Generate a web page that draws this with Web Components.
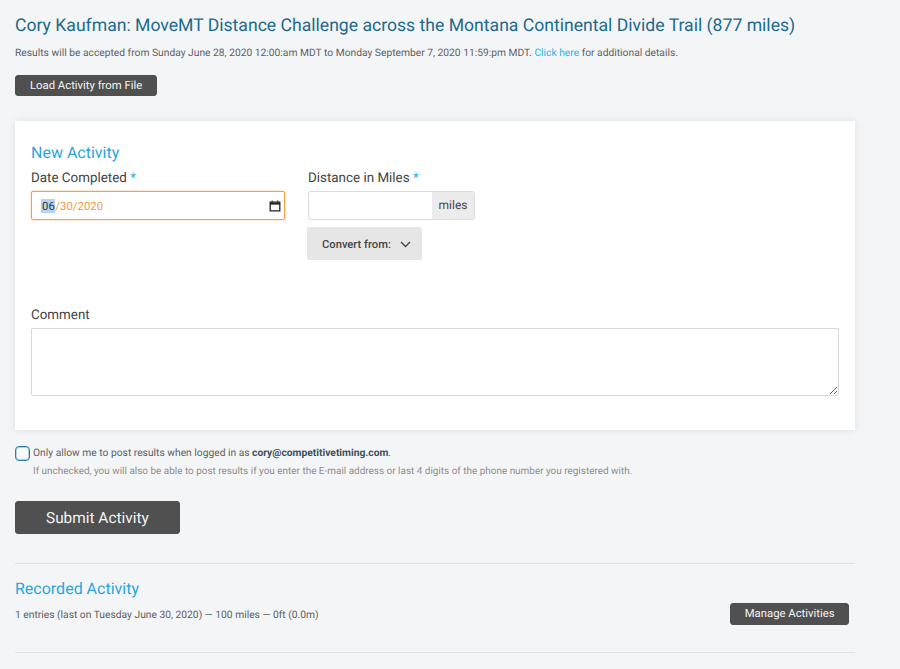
<!DOCTYPE html>
<html lang="en">
<head>
<meta charset="utf-8">
<title>MoveMT Distance Challenge</title>
<style>
html, body { margin: 0; padding: 0; }
body { background: #f4f5f7; font-family: Roboto, "Liberation Sans", sans-serif; color: #4a4a4a; text-rendering: geometricPrecision; }
</style>
</head>
<body>

<activity-page>
  <span slot="title">Cory Kaufman: MoveMT Distance Challenge across the Montana Continental Divide Trail (877 miles)</span>
  <activity-form slot="form"></activity-form>
  <recorded-activity slot="recorded"></recorded-activity>
</activity-page>

<script>
const pageTemplate = document.createElement('template')
pageTemplate.innerHTML = `
<style>
:host { display: block; height: 669px; overflow: hidden; box-sizing: border-box; padding: 16px 45px 0 15px; }
h1 { margin: 0; font-size: 17.6px; line-height: 21px; font-weight: 400; color: #1c6a8c; white-space: nowrap; }
p { margin: 9px 0 0; font-size: 10.27px; line-height: 14px; color: #5f5f5f; white-space: nowrap; }
a { color: #29b6ee; text-decoration: none; }
.load { display: block; margin-top: 15px; }
</style>
<h1><slot name="title"></slot></h1>
<p>Results will be accepted from Sunday June 28, 2020 12:00:am MDT to Monday September 7, 2020 11:59:pm MDT. <a href="#">Click here</a> for additional details.</p>
<dark-button class="load">Load Activity from File</dark-button>
<slot name="form"></slot>
<slot name="recorded"></slot>
`
class ActivityPage extends HTMLElement {
  constructor() {
    super()
    this.attachShadow({ mode: 'open' }).appendChild(pageTemplate.content.cloneNode(true))
  }
}

const buttonTemplate = document.createElement('template')
buttonTemplate.innerHTML = `
<style>
:host { display: inline-block; }
button { display: block; box-sizing: border-box; height: 21px; padding: 0 14px; border: 1px solid #4f4f4f; border-radius: 3px;
  background: #505050; color: #f4f4f4; font: 400 11.3px/19px Roboto, "Liberation Sans", sans-serif; white-space: nowrap; text-rendering: geometricPrecision; }
:host([tall]) button { height: 22px; line-height: 20px; padding: 0 13.5px; }
:host([big]) button { height: 33px; padding: 2px 30px 0; border-radius: 3px; font-size: 15.4px; line-height: 29px; }
</style>
<button type="button"><slot></slot></button>
`
class DarkButton extends HTMLElement {
  constructor() {
    super()
    this.attachShadow({ mode: 'open' }).appendChild(buttonTemplate.content.cloneNode(true))
  }
}

const labelTemplate = document.createElement('template')
labelTemplate.innerHTML = `
<style>
:host { display: block; font-size: 13.4px; line-height: 16px; color: #444; white-space: nowrap; }
span { color: #29b6ee; }
</style>
<slot></slot><span id="star"></span>
`
class FieldLabel extends HTMLElement {
  constructor() {
    super()
    this.attachShadow({ mode: 'open' }).appendChild(labelTemplate.content.cloneNode(true))
  }
  connectedCallback() {
    if (this.hasAttribute('required')) this.shadowRoot.querySelector('#star').textContent = ' *'
  }
}

const dateTemplate = document.createElement('template')
dateTemplate.innerHTML = `
<style>
:host { display: flex; align-items: center; justify-content: space-between; box-sizing: border-box; width: 254px; height: 29px;
  padding: 0 3px 0 9px; background: #fff; border: 1px solid #f5a04a; border-radius: 2px; box-shadow: 0 0 2px #f7b26c;
  font-size: 11.4px; color: #f39a3f; }
mark { background: #b6d5f5; color: #333; padding: 0 .5px 0 1px; margin: 0; }
svg { display: block; width: 12px; height: 12px; }
</style>
<span class="value"><mark>06</mark>/30/2020</span>
<svg viewBox="0 0 12 12" fill="none" stroke="#222"><path d="M1.2 2.2h9.6v8.6H1.2z" stroke-width="1.3"/><path d="M1 3.6h10" stroke-width="2"/><path d="M3.2 .6v1.6M8.8 .6v1.6" stroke-width="1.1"/></svg>
`
class DateField extends HTMLElement {
  constructor() {
    super()
    this.attachShadow({ mode: 'open' }).appendChild(dateTemplate.content.cloneNode(true))
  }
}

const milesTemplate = document.createElement('template')
milesTemplate.innerHTML = `
<style>
:host { display: flex; box-sizing: border-box; width: 167px; height: 29px; border: 1px solid #dcdcdc; border-radius: 3px; background: #fff; overflow: hidden; }
.box { flex: 1; }
.unit { box-sizing: border-box; width: 42px; background: #ececec; font-size: 12px; line-height: 27px; text-align: center; color: #444; }
</style>
<div class="box"></div><div class="unit">miles</div>
`
class MilesField extends HTMLElement {
  constructor() {
    super()
    this.attachShadow({ mode: 'open' }).appendChild(milesTemplate.content.cloneNode(true))
  }
}

const convertTemplate = document.createElement('template')
convertTemplate.innerHTML = `
<style>
:host { display: inline-flex; align-items: center; box-sizing: border-box; width: 115px; height: 33px; padding: 1px 0 0 15px; gap: 9px; margin-left: -1px;
  background: #e6e6e6; border-radius: 2px; font-size: 11.2px; font-weight: 500; color: #444; white-space: nowrap; }
svg { display: block; width: 11px; height: 7px; }
</style>
<span>Convert from:</span>
<svg viewBox="0 0 11 7" fill="none" stroke="#444" stroke-width="1.4"><path d="M1 1l4.5 4.5L10 1"/></svg>
`
class ConvertMenu extends HTMLElement {
  constructor() {
    super()
    this.attachShadow({ mode: 'open' }).appendChild(convertTemplate.content.cloneNode(true))
  }
}

const formTemplate = document.createElement('template')
formTemplate.innerHTML = `
<style>
:host { display: block; }
.card { box-sizing: border-box; width: 840px; height: 309px; margin: 25px 0 0 0; padding: 22px 15px 0 16px; background: #fff; box-shadow: 0 0 8px rgba(0,0,0,.09); }
h2 { margin: 0; font-size: 16px; line-height: 19px; font-weight: 400; color: #29a5dc; }
.row { display: flex; gap: 23px; margin-top: 9px; height: 137px; }
.col { display: flex; flex-direction: column; align-items: flex-start; }
field-label { margin-bottom: 4px; }
convert-menu { margin-top: 7px; }
textarea { display: block; box-sizing: border-box; width: 808px; height: 68px; margin: 0; padding: 4px; background: #fff; border: 1px solid #d9d9d9; border-radius: 2px; outline: 0; font: inherit; }
.check { display: flex; align-items: center; gap: 3px; margin-top: 15px; font-size: 10.27px; line-height: 16px; color: #5f5f5f; white-space: nowrap; }
.tick { display: block; box-sizing: border-box; width: 15px; height: 15px; border: 1px solid #2f7ea3; border-radius: 4px; background: #f8f9fa; box-shadow: inset 0 0 0 1px rgba(47,126,163,.35); }
b { font-weight: 700; color: #3c4f59; }
.hint { margin: 4px 0 0 18px; font-size: 9.95px; line-height: 13px; color: #8e8e8e; white-space: nowrap; }
dark-button { display: block; margin-top: 23px; width: 165px; }
</style>
<div class="card">
  <h2>New Activity</h2>
  <div class="row">
    <div class="col">
      <field-label required>Date Completed</field-label>
      <date-field></date-field>
    </div>
    <div class="col">
      <field-label required>Distance in Miles</field-label>
      <miles-field></miles-field>
      <convert-menu></convert-menu>
    </div>
  </div>
  <field-label>Comment</field-label>
  <textarea></textarea>
</div>
<div class="check"><span class="tick"></span><span>Only allow me to post results when logged in as <b>cory@competitivetiming.com</b>.</span></div>
<div class="hint">If unchecked, you will also be able to post results if you enter the E-mail address or last 4 digits of the phone number you registered with.</div>
<dark-button big>Submit Activity</dark-button>
`
class ActivityForm extends HTMLElement {
  constructor() {
    super()
    this.attachShadow({ mode: 'open' }).appendChild(formTemplate.content.cloneNode(true))
  }
}

const recordedTemplate = document.createElement('template')
recordedTemplate.innerHTML = `
<style>
:host { display: block; box-sizing: border-box; width: 840px; height: 90px; margin-top: 29px; border-top: 1px solid #e0e1e3; border-bottom: 1px solid #e4e5e7; padding-top: 15px; }
h2 { margin: 0; font-size: 16px; line-height: 19px; font-weight: 400; color: #29a5dc; }
.line { display: flex; align-items: center; justify-content: space-between; padding-right: 6px; margin-top: 5px; font-size: 10.27px; color: #5f5f5f; }
</style>
<h2>Recorded Activity</h2>
<div class="line"><span>1 entries (last on Tuesday June 30, 2020) — 100 miles — 0ft (0.0m)</span><dark-button tall>Manage Activities</dark-button></div>
`
class RecordedActivity extends HTMLElement {
  constructor() {
    super()
    this.attachShadow({ mode: 'open' }).appendChild(recordedTemplate.content.cloneNode(true))
  }
}

customElements.define('dark-button', DarkButton)
customElements.define('field-label', FieldLabel)
customElements.define('date-field', DateField)
customElements.define('miles-field', MilesField)
customElements.define('convert-menu', ConvertMenu)
customElements.define('activity-form', ActivityForm)
customElements.define('recorded-activity', RecordedActivity)
customElements.define('activity-page', ActivityPage)
</script>
</body>
</html>
